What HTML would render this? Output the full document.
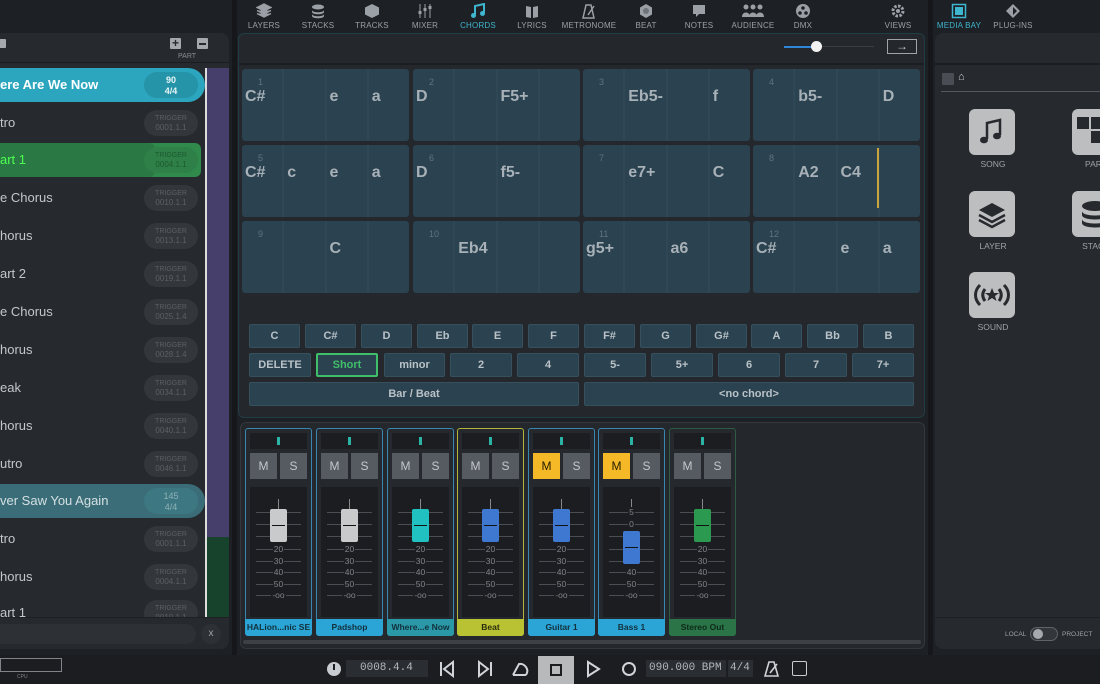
<!DOCTYPE html>
<html><head><meta charset="utf-8"><style>
*{box-sizing:border-box;margin:0;padding:0}
body{width:1100px;height:684px;overflow:hidden;background:#1d2024;font-family:"Liberation Sans",sans-serif;position:relative;color:#c8ccd0}
.a{position:absolute}
.nav{position:absolute;top:3px;width:60px;text-align:center;font-size:8px;color:#9aa0a6;letter-spacing:.2px}
.nav svg{display:block;margin:0 auto 2px;width:16px;height:16px}
.nav.on{color:#3fb6cf}
.row{position:absolute;left:0;width:205px;height:34px;font-size:13px;line-height:34px;color:#c3c7cb}
.bd{position:absolute;left:144px;top:4px;width:54px;height:26px;border-radius:13px;background:#33363b;color:#5c6066;font-size:7px;line-height:9px;text-align:center;padding-top:4px}
.bd b{font-weight:normal;font-size:8px}
.cell{position:absolute;width:167px;height:72px;background:#2b4250;border-radius:3px;display:flex}
.cell div{flex:1;border-right:2px solid #304856;position:relative;font-weight:bold;font-size:16px;color:#a7b1b7;padding:19px 0 0 3px}
.cell div:last-child{border-right:0}
.cell i{position:absolute;font-style:normal;font-weight:normal;font-size:9px;color:#5e7482;top:8px;left:16px}
.btn{position:absolute;height:24px;background:#2b4250;border:1px solid #36505e;border-radius:2px;font-size:11px;font-weight:bold;color:#b9c2c7;text-align:center;line-height:22px}
.ch{position:absolute;top:428px;width:67px;height:208px;border:1px solid #3a86b2;border-radius:3px;background:#25282c}
.ch .mt{position:absolute;left:4px;top:4px;width:57px;height:16px;background:#1b1d20}
.ch .mt:after{content:"";position:absolute;left:27px;top:4px;width:3px;height:8px;background:#2bb3a5}
.ch .m,.ch .s{position:absolute;top:24px;width:27px;height:26px;background:#565b62;color:#c3c7cb;font-size:12px;text-align:center;line-height:26px}
.ch .m{left:4px}.ch .s{left:34px}
.ch .fd{position:absolute;left:4px;top:58px;width:57px;height:130px;background:#1b1d20}
.ch .fd:before{content:"";position:absolute;left:6px;top:62px;width:45px;height:1px;background:#4a4e54;box-shadow:0 12px #4a4e54,0 23px #4a4e54,0 35px #4a4e54,0 46px #4a4e54}
.ch .lb{position:absolute;left:-1px;bottom:-1px;width:67px;height:17px;background:#2aa5d6;color:#12303c;font-size:8.5px;font-weight:bold;text-align:center;line-height:17px;border-radius:0 0 3px 3px}
.tk{position:absolute;left:6px;width:45px;height:1px;background:#4a4e54}
.tl{position:absolute;left:0;width:57px;text-align:center;font-size:8.5px;color:#80858b;line-height:9px}
.tl span{background:#1b1d20;padding:0 1px}
.cap{position:absolute;left:20px;top:22px;width:17px;height:33px;border-radius:2px}
.cap:after{content:"";position:absolute;left:2px;top:16px;width:13px;height:1px;background:#111}
.stem{position:absolute;left:28px;top:12px;width:1px;height:10px;background:#888}
.mi{position:absolute;width:46px;height:46px;background:#bdbec0;border-radius:6px}
.ml{position:absolute;font-size:8.5px;color:#9ea3a8;width:60px;text-align:center}
</style></head><body>

<div class="a" style="left:0;top:0;width:1100px;height:33px;background:#1d2024"></div>
<div class="a" style="left:232px;top:0;width:5px;height:655px;background:#15171a"></div>
<div class="a" style="left:928px;top:0;width:5px;height:655px;background:#15171a"></div>

<div class="nav" style="left:234px"><svg viewBox="0 0 16 16"><path d="M8 1L15 4.5 8 8 1 4.5z M1 7.5L8 11 15 7.5 M1 10.5L8 14 15 10.5" fill="#9aa0a6" stroke="#9aa0a6" stroke-width="1.3"/></svg>LAYERS</div>
<div class="nav" style="left:288px"><svg viewBox="0 0 16 16"><ellipse cx="8" cy="4" rx="6" ry="2.5" fill="#9aa0a6"/><path d="M2 7c0 3 12 3 12 0v2c0 3-12 3-12 0z M2 11c0 3 12 3 12 0v2c0 3-12 3-12 0z" fill="#9aa0a6"/></svg>STACKS</div>
<div class="nav" style="left:342px"><svg viewBox="0 0 16 16"><path d="M8 1L15 4.5V11.5L8 15 1 11.5V4.5z" fill="#9aa0a6"/></svg>TRACKS</div>
<div class="nav" style="left:395px"><svg viewBox="0 0 16 16"><path d="M3 1v14M8 1v14M13 1v14" stroke="#9aa0a6"/><rect x="1.5" y="8" width="3" height="3" fill="#9aa0a6"/><rect x="6.5" y="5" width="3" height="3" fill="#9aa0a6"/><rect x="11.5" y="3" width="3" height="3" fill="#9aa0a6"/></svg>MIXER</div>
<div class="nav on" style="left:448px"><svg viewBox="0 0 16 16"><path d="M5 12V3l9-2v9" stroke="#3fb6cf" stroke-width="2" fill="none"/><circle cx="3.5" cy="12.5" r="2.5" fill="#3fb6cf"/><circle cx="12.5" cy="10.5" r="2.5" fill="#3fb6cf"/></svg>CHORDS</div>
<div class="nav" style="left:502px"><svg viewBox="0 0 16 16"><path d="M2 3l5 1v11l-5-1zM14 3l-5 1v11l5-1z" fill="#9aa0a6"/></svg>LYRICS</div>
<div class="nav" style="left:559px"><svg viewBox="0 0 16 16"><path d="M5 2h5l3 13H2z M7 12l6-9" stroke="#9aa0a6" stroke-width="1.5" fill="none"/></svg>METRONOME</div>
<div class="nav" style="left:616px"><svg viewBox="0 0 16 16"><path d="M8 1l6 3.5v7L8 15 2 11.5v-7z" fill="#9aa0a6"/><circle cx="8" cy="8" r="3" fill="#6e747a"/></svg>BEAT</div>
<div class="nav" style="left:669px"><svg viewBox="0 0 16 16"><path d="M2 2h12v9H8l-3 3v-3H2z" fill="#9aa0a6"/></svg>NOTES</div>
<div class="nav" style="left:723px;width:60px"><svg viewBox="0 0 24 16" style="width:24px"><circle cx="5" cy="4" r="2.5" fill="#9aa0a6"/><circle cx="12" cy="4" r="2.5" fill="#9aa0a6"/><circle cx="19" cy="4" r="2.5" fill="#9aa0a6"/><path d="M1 14c0-6 8-6 8 0zM8 14c0-6 8-6 8 0zM15 14c0-6 8-6 8 0z" fill="#9aa0a6"/></svg>AUDIENCE</div>
<div class="nav" style="left:773px"><svg viewBox="0 0 16 16"><circle cx="8" cy="8" r="7" fill="#9aa0a6"/><circle cx="8" cy="5" r="1.8" fill="#1d2024"/><circle cx="5" cy="10" r="1.8" fill="#1d2024"/><circle cx="11" cy="10" r="1.8" fill="#1d2024"/></svg>DMX</div>
<div class="nav" style="left:868px"><svg viewBox="0 0 16 16"><circle cx="8" cy="8" r="5" stroke="#9aa0a6" stroke-width="3" fill="none" stroke-dasharray="2.5 1.4"/><circle cx="8" cy="8" r="2" fill="#9aa0a6"/></svg>VIEWS</div>
<div class="nav on" style="left:929px"><svg viewBox="0 0 16 16"><rect x="1.5" y="1.5" width="13" height="13" stroke="#3fb6cf" stroke-width="1.5" fill="none"/><rect x="4" y="4" width="8" height="8" fill="#3fb6cf"/></svg>MEDIA BAY</div>
<div class="nav" style="left:983px"><svg viewBox="0 0 16 16"><path d="M8 1l7 7-7 7-7-7z" fill="#9aa0a6"/><path d="M8 4l4 4-4 4z" fill="#1d2024"/></svg>PLUG-INS</div>

<div class="a" style="left:0;top:33px;width:229px;height:616px;background:#26292d;border-radius:0 8px 8px 0"></div>
<div class="a" style="left:0;top:62px;width:229px;height:1px;background:#1b1d20"></div>
<div class="a" style="left:-3px;top:39px;width:9px;height:9px;background:#a5a9ad;border-radius:1px"></div>
<div class="a" style="left:170px;top:38px;width:11px;height:11px;background:#a5a9ad;border-radius:1px;color:#26292d;font-size:12px;line-height:11px;text-align:center;font-weight:bold">+</div>
<div class="a" style="left:197px;top:38px;width:11px;height:11px;background:#a5a9ad;border-radius:1px"><div class="a" style="left:2px;top:5px;width:7px;height:1.5px;background:#26292d"></div></div>
<div class="a" style="left:178px;top:53px;font-size:7px;color:#8a8f94">PART</div>
<div class="a" style="left:207px;top:68px;width:22px;height:469px;background:#463f6c"></div>
<div class="a" style="left:207px;top:537px;width:22px;height:80px;background:#17432c"></div>
<div class="a" style="left:205px;top:68px;width:2px;height:549px;background:#dcdcdc"></div>

<div class="row" style="top:68px;background:#2ba6be;border-radius:0 17px 17px 0;color:#fff;font-weight:bold;font-size:13px">ere Are We Now<div class="bd" style="background:#2593a8;color:#e8f6f8;font-size:9px;line-height:11px;padding-top:3px;font-weight:bold">90<br>4/4</div></div>
<div class="row" style="top:106px">tro<div class="bd">TRIGGER<br><b>0001.1.1</b></div></div>
<div class="row" style="top:143px;width:201px;background:#2f8a4c;border-radius:0 6px 6px 0;color:#4dff50"><div class="a" style="left:0;top:0;width:155px;height:34px;background:#2a7843;border-radius:0 6px 6px 0"></div><span style="position:relative">art 1</span><div class="bd" style="background:#2e8048;color:#1d5a30">TRIGGER<br><b>0004.1.1</b></div></div>
<div class="row" style="top:181px">e Chorus<div class="bd">TRIGGER<br><b>0010.1.1</b></div></div>
<div class="row" style="top:219px">horus<div class="bd">TRIGGER<br><b>0013.1.1</b></div></div>
<div class="row" style="top:257px">art 2<div class="bd">TRIGGER<br><b>0019.1.1</b></div></div>
<div class="row" style="top:295px">e Chorus<div class="bd">TRIGGER<br><b>0025.1.4</b></div></div>
<div class="row" style="top:333px">horus<div class="bd">TRIGGER<br><b>0028.1.4</b></div></div>
<div class="row" style="top:371px">eak<div class="bd">TRIGGER<br><b>0034.1.1</b></div></div>
<div class="row" style="top:409px">horus<div class="bd">TRIGGER<br><b>0040.1.1</b></div></div>
<div class="row" style="top:447px">utro<div class="bd">TRIGGER<br><b>0046.1.1</b></div></div>
<div class="row" style="top:484px;background:#3a6d77;border-radius:0 17px 17px 0;color:#d4e0e3">ver Saw You Again<div class="bd" style="background:#3d7882;color:#8fb0b6;font-size:9px;line-height:11px;padding-top:3px">145<br>4/4</div></div>
<div class="row" style="top:522px">tro<div class="bd">TRIGGER<br><b>0001.1.1</b></div></div>
<div class="row" style="top:560px">horus<div class="bd">TRIGGER<br><b>0004.1.1</b></div></div>
<div class="row" style="top:596px;height:21px;overflow:hidden">art 1<div class="bd">TRIGGER<br><b>0010.1.1</b></div></div>
<div class="a" style="left:0;top:617px;width:229px;height:32px;background:#26292d;border-top:1px solid #1e2023;border-radius:0 0 8px 0"></div>
<div class="a" style="left:0;top:624px;width:196px;height:20px;background:#2d3035;border-radius:0 10px 10px 0"></div>
<div class="a" style="left:201px;top:624px;width:20px;height:20px;border-radius:10px;background:#2d3035;color:#a0a4a8;font-size:10px;text-align:center;line-height:20px">x</div>

<div class="a" style="left:238px;top:33px;width:687px;height:385px;background:#24272b;border:1px solid #1e3d44;border-radius:6px"></div>
<div class="a" style="left:239px;top:63px;width:685px;height:2px;background:#1b1d20"></div>
<div class="a" style="left:784px;top:46px;width:32px;height:2px;background:#2f86d8"></div>
<div class="a" style="left:816px;top:46px;width:58px;height:1px;background:#3a3d42"></div>
<div class="a" style="left:811px;top:41px;width:11px;height:11px;border-radius:6px;background:#f2f2f2"></div>
<div class="a" style="left:887px;top:39px;width:30px;height:15px;border:1px solid #a0a4a8;color:#c0c4c8;font-size:12px;line-height:12px;text-align:center">&#8594;</div>

<div class="cell" style="left:242px;top:69px"><div><i>1</i>C#</div><div></div><div>e</div><div>a</div></div>
<div class="cell" style="left:413px;top:69px"><div><i>2</i>D</div><div></div><div>F5+</div><div></div></div>
<div class="cell" style="left:583px;top:69px"><div><i>3</i></div><div>Eb5-</div><div></div><div>f</div></div>
<div class="cell" style="left:753px;top:69px"><div><i>4</i></div><div>b5-</div><div></div><div>D</div></div>
<div class="cell" style="left:242px;top:145px"><div><i>5</i>C#</div><div>c</div><div>e</div><div>a</div></div>
<div class="cell" style="left:413px;top:145px"><div><i>6</i>D</div><div></div><div>f5-</div><div></div></div>
<div class="cell" style="left:583px;top:145px"><div><i>7</i></div><div>e7+</div><div></div><div>C</div></div>
<div class="cell" style="left:753px;top:145px"><div><i>8</i></div><div>A2</div><div>C4</div><div></div></div>
<div class="a" style="left:877px;top:148px;width:2px;height:60px;background:#c9a43a"></div>
<div class="cell" style="left:242px;top:221px"><div><i>9</i></div><div></div><div>C</div><div></div></div>
<div class="cell" style="left:413px;top:221px"><div><i>10</i></div><div>Eb4</div><div></div><div></div></div>
<div class="cell" style="left:583px;top:221px"><div><i>11</i>g5+</div><div></div><div>a6</div><div></div></div>
<div class="cell" style="left:753px;top:221px"><div><i>12</i>C#</div><div></div><div>e</div><div>a</div></div>

<div class="btn" style="left:249px;top:324px;width:51px">C</div>
<div class="btn" style="left:305px;top:324px;width:51px">C#</div>
<div class="btn" style="left:361px;top:324px;width:51px">D</div>
<div class="btn" style="left:417px;top:324px;width:51px">Eb</div>
<div class="btn" style="left:472px;top:324px;width:51px">E</div>
<div class="btn" style="left:528px;top:324px;width:51px">F</div>
<div class="btn" style="left:584px;top:324px;width:51px">F#</div>
<div class="btn" style="left:640px;top:324px;width:51px">G</div>
<div class="btn" style="left:696px;top:324px;width:51px">G#</div>
<div class="btn" style="left:751px;top:324px;width:51px">A</div>
<div class="btn" style="left:807px;top:324px;width:51px">Bb</div>
<div class="btn" style="left:863px;top:324px;width:51px">B</div>
<div class="btn" style="left:249px;top:353px;width:62px">DELETE</div>
<div class="btn" style="left:316px;top:353px;width:62px;border:2px solid #3fbf6a;color:#3fbf6a;line-height:20px">Short</div>
<div class="btn" style="left:384px;top:353px;width:61px">minor</div>
<div class="btn" style="left:450px;top:353px;width:62px">2</div>
<div class="btn" style="left:517px;top:353px;width:62px">4</div>
<div class="btn" style="left:584px;top:353px;width:62px">5-</div>
<div class="btn" style="left:651px;top:353px;width:62px">5+</div>
<div class="btn" style="left:718px;top:353px;width:62px">6</div>
<div class="btn" style="left:785px;top:353px;width:62px">7</div>
<div class="btn" style="left:852px;top:353px;width:62px">7+</div>
<div class="btn" style="left:249px;top:382px;width:330px">Bar / Beat</div>
<div class="btn" style="left:584px;top:382px;width:330px">&lt;no chord&gt;</div>

<div class="a" style="left:240px;top:422px;width:685px;height:227px;background:#24272b;border:1px solid #34383d;border-radius:6px"></div>
<div class="a" style="left:243px;top:640px;width:678px;height:4px;background:#3d4146;border-radius:2px"></div>

<div class="ch" style="left:245px"><div class="mt"></div><div class="m">M</div><div class="s">S</div><div class="fd">
<div class="stem"></div><div class="tk" style="top:25px"></div><div class="tk" style="top:37px"></div><div class="tk" style="top:49px"></div>
<div class="tl" style="top:58px"><span>20</span></div><div class="tl" style="top:70px"><span>30</span></div><div class="tl" style="top:81px"><span>40</span></div><div class="tl" style="top:93px"><span>50</span></div><div class="tl" style="top:104px"><span>-oo</span></div>
<div class="cap" style="background:#c9cacc"></div></div><div class="lb">HALion...nic SE</div></div>

<div class="ch" style="left:316px"><div class="mt"></div><div class="m">M</div><div class="s">S</div><div class="fd">
<div class="stem"></div><div class="tk" style="top:25px"></div><div class="tk" style="top:37px"></div><div class="tk" style="top:49px"></div>
<div class="tl" style="top:58px"><span>20</span></div><div class="tl" style="top:70px"><span>30</span></div><div class="tl" style="top:81px"><span>40</span></div><div class="tl" style="top:93px"><span>50</span></div><div class="tl" style="top:104px"><span>-oo</span></div>
<div class="cap" style="background:#c9cacc"></div></div><div class="lb">Padshop</div></div>

<div class="ch" style="left:387px"><div class="mt"></div><div class="m">M</div><div class="s">S</div><div class="fd">
<div class="stem"></div><div class="tk" style="top:25px"></div><div class="tk" style="top:37px"></div><div class="tk" style="top:49px"></div>
<div class="tl" style="top:58px"><span>20</span></div><div class="tl" style="top:70px"><span>30</span></div><div class="tl" style="top:81px"><span>40</span></div><div class="tl" style="top:93px"><span>50</span></div><div class="tl" style="top:104px"><span>-oo</span></div>
<div class="cap" style="background:#22c1c1"></div></div><div class="lb" style="background:#2a98a6">Where...e Now</div></div>

<div class="ch" style="left:457px;border-color:#b4b43a"><div class="mt"></div><div class="m">M</div><div class="s">S</div><div class="fd">
<div class="stem"></div><div class="tk" style="top:25px"></div><div class="tk" style="top:37px"></div><div class="tk" style="top:49px"></div>
<div class="tl" style="top:58px"><span>20</span></div><div class="tl" style="top:70px"><span>30</span></div><div class="tl" style="top:81px"><span>40</span></div><div class="tl" style="top:93px"><span>50</span></div><div class="tl" style="top:104px"><span>-oo</span></div>
<div class="cap" style="background:#3f78d0"></div></div><div class="lb" style="background:#b9c232;color:#2a2c0e">Beat</div></div>

<div class="ch" style="left:528px"><div class="mt"></div><div class="m" style="background:#f5b928;color:#2a2000">M</div><div class="s">S</div><div class="fd">
<div class="stem"></div><div class="tk" style="top:25px"></div><div class="tk" style="top:37px"></div><div class="tk" style="top:49px"></div>
<div class="tl" style="top:58px"><span>20</span></div><div class="tl" style="top:70px"><span>30</span></div><div class="tl" style="top:81px"><span>40</span></div><div class="tl" style="top:93px"><span>50</span></div><div class="tl" style="top:104px"><span>-oo</span></div>
<div class="cap" style="background:#3f78d0"></div></div><div class="lb">Guitar 1</div></div>

<div class="ch" style="left:598px"><div class="mt"></div><div class="m" style="background:#f5b928;color:#2a2000">M</div><div class="s">S</div><div class="fd">
<div class="stem"></div><div class="tk" style="top:25px"></div><div class="tk" style="top:37px"></div><div class="tk" style="top:49px"></div>
<div class="tl" style="top:21px"><span>5</span></div><div class="tl" style="top:33px"><span>0</span></div>
<div class="tl" style="top:58px"><span>20</span></div><div class="tl" style="top:70px"><span>30</span></div><div class="tl" style="top:81px"><span>40</span></div><div class="tl" style="top:93px"><span>50</span></div><div class="tl" style="top:104px"><span>-oo</span></div>
<div class="cap" style="background:#3f78d0;top:44px"></div></div><div class="lb">Bass 1</div></div>

<div class="ch" style="left:669px;border-color:#2f5a44"><div class="mt"></div><div class="m">M</div><div class="s">S</div><div class="fd">
<div class="stem"></div><div class="tk" style="top:25px"></div><div class="tk" style="top:37px"></div><div class="tk" style="top:49px"></div>
<div class="tl" style="top:58px"><span>20</span></div><div class="tl" style="top:70px"><span>30</span></div><div class="tl" style="top:81px"><span>40</span></div><div class="tl" style="top:93px"><span>50</span></div><div class="tl" style="top:104px"><span>-oo</span></div>
<div class="cap" style="background:#2b9a50"></div></div><div class="lb" style="background:#2a7447;color:#0f2a1a">Stereo Out</div></div>

<div class="a" style="left:935px;top:33px;width:170px;height:616px;background:#26292d;border-radius:8px 0 0 8px"></div>
<div class="a" style="left:935px;top:63px;width:165px;height:2px;background:#1b1d20"></div>
<div class="a" style="left:942px;top:73px;width:12px;height:12px;background:#4a4e54;border-radius:1px"></div>
<div class="a" style="left:958px;top:71px;font-size:11px;color:#c8ccd0">&#8962;</div>
<div class="a" style="left:941px;top:91px;width:159px;height:1px;background:#54585e"></div>
<div class="mi" style="left:969px;top:109px"><svg width="46" height="46" viewBox="0 0 46 46"><path d="M18 30V14l13-3v15" stroke="#26292d" stroke-width="2.5" fill="none"/><ellipse cx="15" cy="31" rx="4" ry="3.3" fill="#26292d"/><ellipse cx="28" cy="27" rx="4" ry="3.3" fill="#26292d"/></svg></div>
<div class="ml" style="left:963px;top:159px">SONG</div>
<div class="mi" style="left:1072px;top:109px"><div class="a" style="left:5px;top:8px;width:12px;height:12px;background:#26292d"></div><div class="a" style="left:19px;top:8px;width:12px;height:12px;background:#26292d"></div><div class="a" style="left:19px;top:22px;width:12px;height:12px;background:#26292d"></div></div>
<div class="ml" style="left:1066px;top:159px">PART</div>
<div class="mi" style="left:969px;top:191px"><svg width="46" height="46" viewBox="0 0 46 46"><path d="M23 12l13 7-13 7-13-7z" fill="#26292d"/><path d="M10 24l13 7 13-7M10 29l13 7 13-7" stroke="#26292d" stroke-width="2.5" fill="none"/></svg></div>
<div class="ml" style="left:963px;top:241px">LAYER</div>
<div class="mi" style="left:1072px;top:191px"><svg width="46" height="46" viewBox="0 0 46 46"><ellipse cx="23" cy="15" rx="13" ry="5" fill="#26292d"/><path d="M10 20c0 6 26 6 26 0v4c0 6-26 6-26 0zM10 28c0 6 26 6 26 0v4c0 6-26 6-26 0z" fill="#26292d"/></svg></div>
<div class="ml" style="left:1066px;top:241px">STACK</div>
<div class="mi" style="left:969px;top:272px"><svg width="46" height="46" viewBox="0 0 46 46"><path d="M11 13c-6 6-6 14 0 20M35 13c6 6 6 14 0 20M16 17c-3 4-3 8 0 12M30 17c3 4 3 8 0 12" stroke="#26292d" stroke-width="3" fill="none"/><path d="M23 16l2 5h5l-4 3 1.5 5-4.5-3-4.5 3 1.5-5-4-3h5z" fill="#26292d"/></svg></div>
<div class="ml" style="left:963px;top:322px">SOUND</div>
<div class="a" style="left:935px;top:617px;width:165px;height:1px;background:#1e2023"></div>
<div class="a" style="left:1005px;top:631px;font-size:6.5px;color:#9ea3a8">LOCAL</div>
<div class="a" style="left:1030px;top:627px;width:28px;height:14px;border-radius:7px;border:1px solid #60646a;background:#33363b"></div>
<div class="a" style="left:1033px;top:629px;width:10px;height:10px;border-radius:5px;background:#a6a9ad"></div>
<div class="a" style="left:1062px;top:631px;font-size:6.5px;color:#9ea3a8">PROJECT</div>

<div class="a" style="left:0;top:655px;width:1100px;height:29px;background:#1b1d20"></div>
<div class="a" style="left:0;top:658px;width:62px;height:14px;border:1px solid #808489"></div>
<div class="a" style="left:17px;top:674px;font-size:5px;color:#808489">CPU</div>
<div class="a" style="left:327px;top:662px;width:14px;height:14px;border-radius:7px;background:#c8ccd0"></div>
<div class="a" style="left:333px;top:664px;width:2px;height:6px;background:#1b1d20"></div>
<div class="a" style="left:346px;top:660px;width:82px;height:17px;background:#2a2d31;font-family:'Liberation Mono',monospace;font-size:11px;color:#b4b8bc;line-height:17px;padding-left:14px">0008.4.4</div>
<svg class="a" style="left:438px;top:660px" width="20" height="18" viewBox="0 0 20 18"><path d="M3 2v14M15 2L6 9l9 7z" stroke="#d0d4d8" stroke-width="2" fill="none"/></svg>
<svg class="a" style="left:475px;top:660px" width="20" height="18" viewBox="0 0 20 18"><path d="M16 2v14M4 2l9 7-9 7z" stroke="#d0d4d8" stroke-width="2" fill="none"/></svg>
<svg class="a" style="left:510px;top:660px" width="20" height="18" viewBox="0 0 20 18"><path d="M3 15h13M16 15c4-6-2-12-7-11L3 15" stroke="#d0d4d8" stroke-width="2" fill="none"/></svg>
<div class="a" style="left:538px;top:656px;width:36px;height:28px;background:#b8b9bb"></div>
<div class="a" style="left:550px;top:664px;width:12px;height:12px;border:2px solid #1b1d20"></div>
<svg class="a" style="left:584px;top:660px" width="18" height="18" viewBox="0 0 18 18"><path d="M4 2l11 7-11 7z" stroke="#d0d4d8" stroke-width="2" fill="none"/></svg>
<div class="a" style="left:622px;top:662px;width:14px;height:14px;border-radius:7px;border:2px solid #d0d4d8"></div>
<div class="a" style="left:646px;top:660px;width:80px;height:17px;background:#2a2d31;font-family:'Liberation Mono',monospace;font-size:11px;color:#b4b8bc;line-height:17px;padding-left:3px">090.000 BPM</div>
<div class="a" style="left:728px;top:660px;width:25px;height:17px;background:#2a2d31;font-family:'Liberation Mono',monospace;font-size:11px;color:#b4b8bc;line-height:17px;padding-left:2px">4/4</div>
<svg class="a" style="left:764px;top:660px" width="16" height="18" viewBox="0 0 16 18"><path d="M5 2h5l4 14H1z M6 13l7-9" stroke="#d0d4d8" stroke-width="1.6" fill="none"/></svg>
<div class="a" style="left:792px;top:661px;width:15px;height:15px;border:1.5px solid #c8ccd0;border-radius:2px"></div>
</body></html>
